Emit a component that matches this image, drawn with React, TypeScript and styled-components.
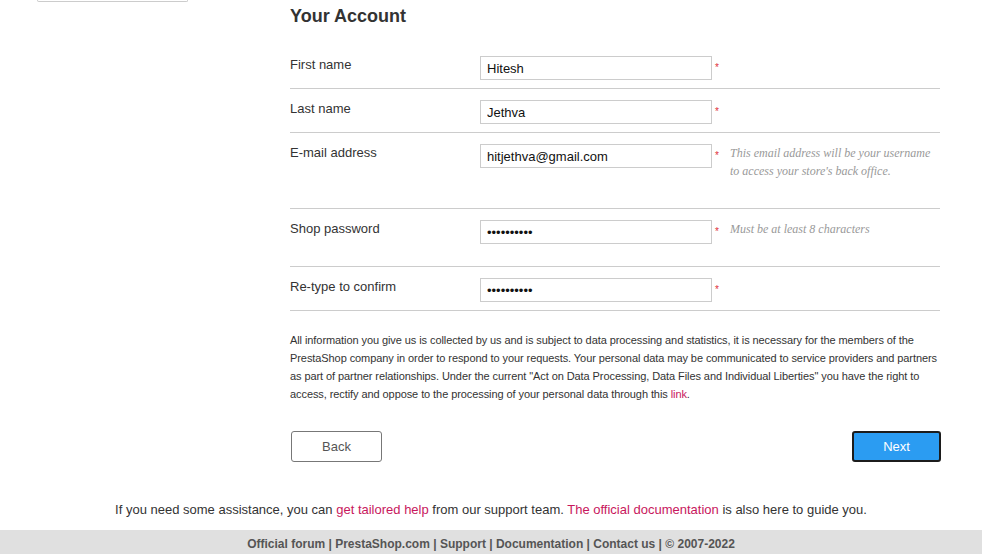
import React from 'react';
import styled, { createGlobalStyle } from 'styled-components';

const GlobalStyle = createGlobalStyle`
  html, body {
    margin: 0;
    padding: 0;
    background: #fff;
    font-family: "Liberation Sans", Arial, sans-serif;
    color: #333;
  }
`;

const Page = styled.div`
  width: 982px;
  height: 554px;
  overflow: hidden;
  display: flex;
  flex-direction: column;
`;

const Body = styled.div`
  display: grid;
  grid-template-columns: 151px 650px;
  column-gap: 102px;
  padding-left: 37px;
`;

const Sidebar = styled.div`
  align-self: start;
`;

const StepBox = styled.div`
  height: 1px;
  border: 1px solid #ccc;
  border-top: none;
  border-radius: 0 0 3px 3px;
`;

const Main = styled.div`
  display: flex;
  flex-direction: column;
`;

const Title = styled.h2`
  margin: 0;
  height: 45px;
  padding-top: 6px;
  box-sizing: border-box;
  font-size: 18px;
  font-weight: bold;
  line-height: 20px;
  color: #333;
`;

const Row = styled.div`
  display: flex;
  align-items: flex-start;
  padding: 11px 0 8px;
  border-bottom: 1px solid #ccc;
`;

const Label = styled.label`
  width: 190px;
  flex-shrink: 0;
  padding-top: 1px;
  font-size: 13px;
  line-height: 16px;
  color: #333;
`;

const Input = styled.input`
  width: 232px;
  height: 24px;
  flex-shrink: 0;
  box-sizing: border-box;
  border: 1px solid #ccc;
  padding: 0 6px;
  font-family: "Liberation Sans", Arial, sans-serif;
  font-size: 13px;
  color: #111;
  outline: none;
`;

const Required = styled.span`
  width: 18px;
  flex-shrink: 0;
  padding-left: 3px;
  box-sizing: border-box;
  color: #e0303a;
  font-size: 10px;
  line-height: 24px;
`;

const Note = styled.p`
  margin: 0 0 20px;
  flex: 1;
  font-family: "Liberation Serif", Georgia, serif;
  font-style: italic;
  font-size: 12px;
  line-height: 18px;
  color: #999;
`;

const Disclaimer = styled.p`
  margin: 20px 0 0;
  font-size: 11px;
  line-height: 18px;
  letter-spacing: -0.08px;
  color: #333;
`;

const Link = styled.a`
  color: #c8175d;
  text-decoration: none;
`;

const Actions = styled.div`
  display: flex;
  justify-content: space-between;
  margin: 28px -1px 0 0;
  padding-left: 1px;
`;

const Button = styled.button<{ primary?: boolean }>`
  height: 31px;
  width: ${({ primary }) => (primary ? '89px' : '91px')};
  box-sizing: border-box;
  border-radius: 3px;
  border: ${({ primary }) => (primary ? '2px solid #1c1c1c' : '1px solid #777')};
  background: ${({ primary }) => (primary ? '#2b9cf2' : '#fff')};
  color: ${({ primary }) => (primary ? '#fff' : '#555')};
  font-family: "Liberation Sans", Arial, sans-serif;
  font-size: 13px;
  cursor: pointer;
`;

const Help = styled.p`
  margin: 40px 0 0;
  text-align: center;
  font-size: 13px;
  line-height: 16px;
  color: #333;
`;

const Footer = styled.div`
  margin-top: 12px;
  flex: 1;
  background: #e0e0e0;
  text-align: center;
  padding-top: 7px;
  font-size: 12px;
  line-height: 14px;
  font-weight: bold;
  color: #555;
`;

type Field = {
  label: string;
  value: string;
  type?: string;
  note?: string;
};

const fields: Field[] = [
  { label: 'First name', value: 'Hitesh' },
  { label: 'Last name', value: 'Jethva' },
  {
    label: 'E-mail address',
    value: 'hitjethva@gmail.com',
    note: "This email address will be your username to access your store's back office.",
  },
  { label: 'Shop password', value: 'hitjethva1', type: 'password', note: 'Must be at least 8 characters' },
  { label: 'Re-type to confirm', value: 'hitjethva1', type: 'password' },
];

const App = () => {
  return (
    <>
      <GlobalStyle />
      <Page>
        <Body>
          <Sidebar>
            <StepBox />
          </Sidebar>
          <Main>
            <Title>Your Account</Title>
            {fields.map((f) => (
              <Row key={f.label}>
                <Label>{f.label}</Label>
                <Input type={f.type || 'text'} defaultValue={f.value} />
                <Required>*</Required>
                {f.note && <Note>{f.note}</Note>}
              </Row>
            ))}
            <Disclaimer>
              All information you give us is collected by us and is subject to data processing and statistics, it is
              necessary for the members of the PrestaShop company in order to respond to your requests. Your personal
              data may be communicated to service providers and partners as part of partner relationships. Under the
              current "Act on Data Processing, Data Files and Individual Liberties" you have the right to access, rectify
              and oppose to the processing of your personal data through this <Link href="#">link</Link>.
            </Disclaimer>
            <Actions>
              <Button>Back</Button>
              <Button primary>Next</Button>
            </Actions>
          </Main>
        </Body>
        <Help>
          If you need some assistance, you can <Link href="#">get tailored help</Link> from our support team.{' '}
          <Link href="#">The official documentation</Link> is also here to guide you.
        </Help>
        <Footer>Official forum | PrestaShop.com | Support | Documentation | Contact us | © 2007-2022</Footer>
      </Page>
    </>
  );
};

export default App;
